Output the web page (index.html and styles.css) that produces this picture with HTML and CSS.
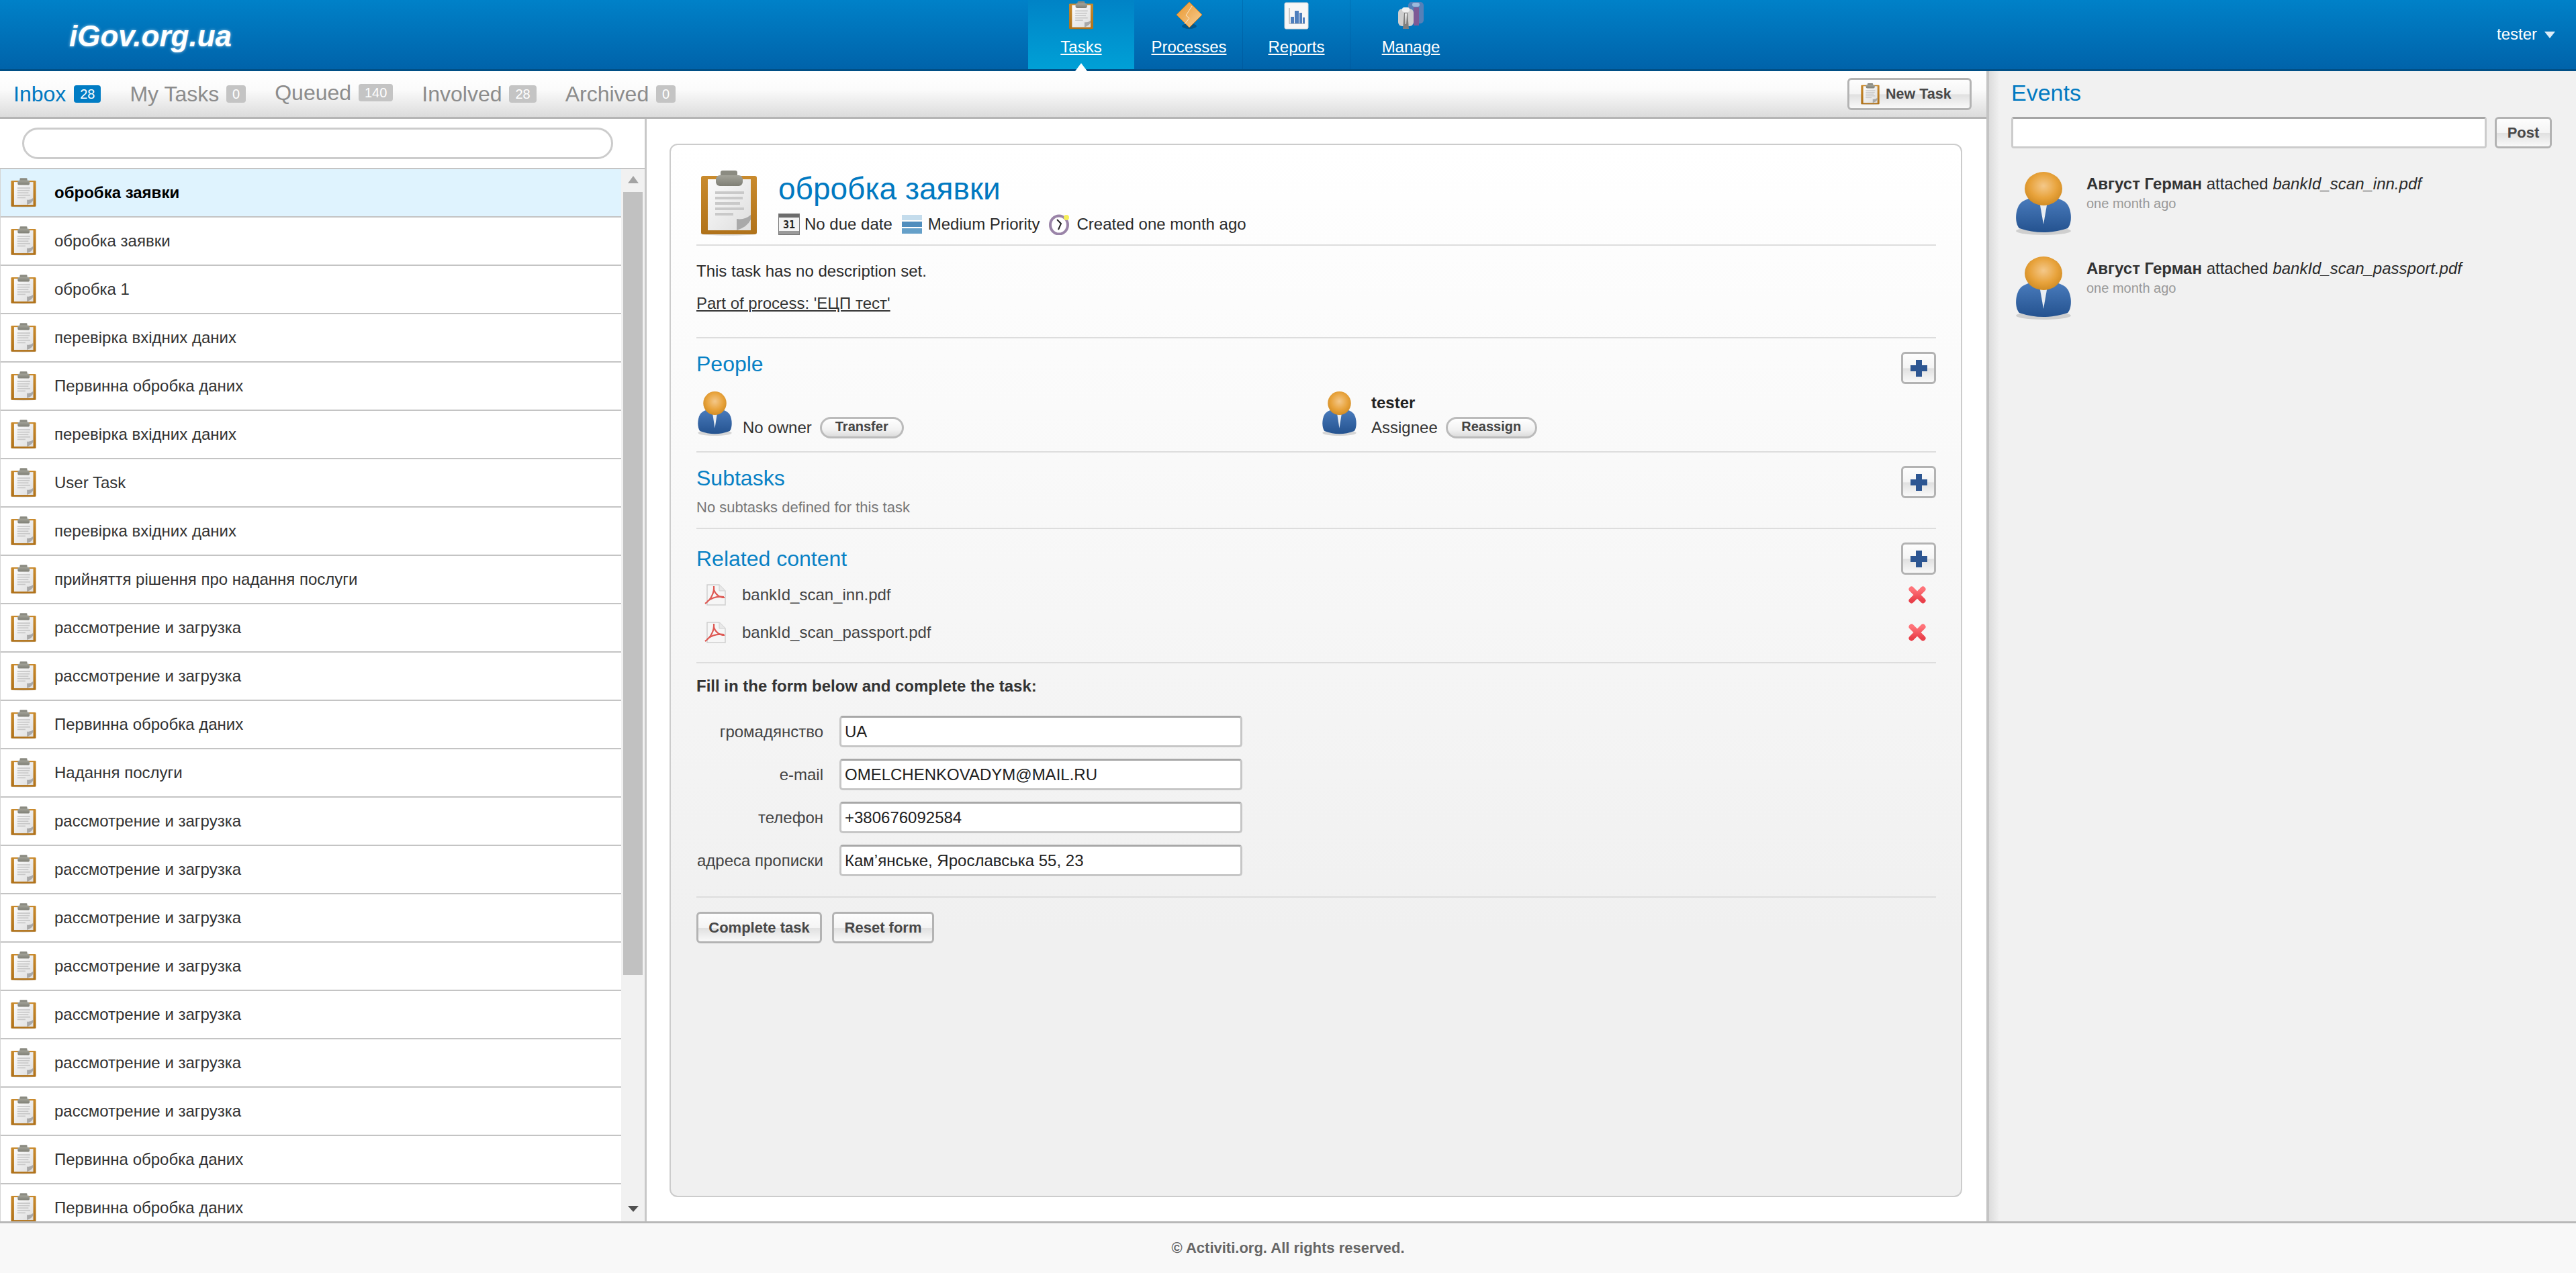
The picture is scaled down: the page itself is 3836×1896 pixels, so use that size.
FILE: index.html
```html
<!DOCTYPE html>
<html lang="en">
<head>
  <meta charset="UTF-8" />
  <title>Activiti Explorer</title>
  <link rel="stylesheet" href="styles.css">
</head>
<body>
  <svg class="icon-defs" xmlns="http://www.w3.org/2000/svg">
    <defs>
      <linearGradient id="gBrown" x1="0" y1="0" x2="0" y2="1"><stop offset="0" stop-color="#c98a2c"/><stop offset="1" stop-color="#b0721a"/></linearGradient>
      <linearGradient id="gPaper" x1="0" y1="0" x2="1" y2="1"><stop offset="0" stop-color="#fbfbfb"/><stop offset="1" stop-color="#dedede"/></linearGradient>
      <linearGradient id="gClip" x1="0" y1="0" x2="0" y2="1"><stop offset="0" stop-color="#a3a399"/><stop offset="1" stop-color="#7f7f75"/></linearGradient>
      <radialGradient id="gHead" cx="0.5" cy="0.42" r="0.6"><stop offset="0" stop-color="#f4c88a"/><stop offset="0.6" stop-color="#e8a33c"/><stop offset="1" stop-color="#cf8a22"/></radialGradient>
      <linearGradient id="gSuit" x1="0" y1="0" x2="0" y2="1"><stop offset="0" stop-color="#4a7cbd"/><stop offset="1" stop-color="#24528f"/></linearGradient>
      <linearGradient id="gDiamond" x1="0" y1="0" x2="1" y2="1"><stop offset="0" stop-color="#e8952c"/><stop offset="1" stop-color="#f8cf96"/></linearGradient>
      <linearGradient id="gRed" x1="0" y1="0" x2="0" y2="1"><stop offset="0" stop-color="#ff7379"/><stop offset="1" stop-color="#e9404a"/></linearGradient>

      <symbol id="i-clipboard" viewBox="0 0 85 97">
        <ellipse cx="42" cy="94" rx="42" ry="3" fill="#000" opacity="0.12"/>
        <rect x="1" y="8" width="83" height="87" rx="3" fill="url(#gBrown)"/>
        <rect x="11" y="13" width="64" height="76" fill="url(#gPaper)"/>
        <rect x="30" y="0" width="25" height="10" rx="3" fill="#8b8b81"/>
        <rect x="23" y="7" width="40" height="16" rx="6" fill="url(#gClip)"/>
        <g fill="#c9c9c9">
          <rect x="22" y="31" width="43" height="4"/>
          <rect x="22" y="39" width="41" height="4"/>
          <rect x="22" y="47" width="37" height="4"/>
          <rect x="22" y="55" width="43" height="4"/>
          <rect x="22" y="63" width="27" height="4"/>
        </g>
        <path d="M54 89 L54 72 Q66 74 75 66 L75 73 Q70 84 54 89Z" fill="#a9a9a9"/>
      </symbol>

      <symbol id="i-person" viewBox="0 0 86 94" preserveAspectRatio="none">
        <ellipse cx="43" cy="88" rx="41" ry="6" fill="#000" opacity="0.14"/>
        <path d="M7 84 C0 76 1 58 7 49 C12 42 20 40 28 38 L58 38 C66 40 74 42 79 49 C85 58 86 76 79 84 Q43 96 7 84Z" fill="url(#gSuit)"/>
        <path d="M37 44 L49 44 L43 78Z" fill="#e8edf3"/>
        <ellipse cx="43" cy="25" rx="28" ry="25" fill="url(#gHead)"/>
      </symbol>

      <symbol id="i-process" viewBox="0 0 42 42">
        <ellipse cx="21" cy="37" rx="11" ry="4" fill="#000" opacity="0.25"/>
        <path d="M21 1 L40 20 L21 39 L2 20Z" fill="url(#gDiamond)" stroke="#d67f1c" stroke-width="1"/>
        <path d="M25 7 L16 21 L21 25 L14 34" fill="none" stroke="#fff" stroke-width="1" opacity="0.7"/>
      </symbol>

      <symbol id="i-report" viewBox="0 0 42 42">
        <rect x="3" y="2" width="35" height="39" rx="2" fill="#f7f7f7" stroke="#d8d8d8"/>
        <path d="M10 10 L10 33 L33 33" fill="none" stroke="#999" stroke-width="1"/>
        <g fill="#4f7fbd">
          <rect x="12" y="23" width="5" height="10"/>
          <rect x="18" y="14" width="6" height="19"/>
          <rect x="25" y="17" width="4" height="16"/>
          <rect x="30" y="24" width="3" height="9"/>
        </g>
      </symbol>

      <symbol id="i-manage" viewBox="0 0 42 42">
        <rect x="17" y="1" width="23" height="32" rx="5" fill="#5580b8"/>
        <rect x="23" y="2" width="11" height="6" rx="3" fill="#9db9dc"/>
        <rect x="25" y="9" width="8" height="27" fill="#7d5a95"/>
        <rect x="2" y="11" width="23" height="26" rx="6" fill="#cfcfcf"/>
        <rect x="8" y="9" width="11" height="7" rx="3" fill="#f0f0f0"/>
        <path d="M11 17 L16 17 L18 41 L9 41Z" fill="#7f7f7f"/>
        <path d="M12 18 L15 18 L14 34 L13 34Z" fill="#eee"/>
      </symbol>

      <symbol id="i-calendar" viewBox="0 0 32 32">
        <rect x="0.5" y="0.5" width="31" height="31" fill="#f3f3f3" stroke="#777"/>
        <rect x="1" y="1" width="30" height="5" fill="#6c6c6c"/>
        <rect x="1" y="26" width="30" height="5" fill="#9a9a9a"/>
        <text x="16" y="22" text-anchor="middle" class="cal-day">31</text>
      </symbol>

      <symbol id="i-priority" viewBox="0 0 30 28">
        <rect x="0" y="0" width="30" height="8" fill="#c4dcec"/>
        <rect x="0" y="10" width="30" height="8" fill="#4f8dbd"/>
        <rect x="0" y="20" width="30" height="8" fill="#65a0c9"/>
      </symbol>

      <symbol id="i-clock" viewBox="0 0 32 32">
        <ellipse cx="15" cy="17" rx="13" ry="13.5" fill="#fff" stroke="#9a84a8" stroke-width="4"/>
        <path d="M12 9 L18 15 L14 24" fill="none" stroke="#222" stroke-width="2"/>
        <circle cx="26" cy="6" r="4" fill="#f5ee5a"/>
      </symbol>

      <symbol id="i-pdf" viewBox="0 0 32 32">
        <path d="M4 1 L22 1 L31 10 L31 31 L4 31Z" fill="#f6f6f6" stroke="#cfcfcf" stroke-width="1.5"/>
        <path d="M22 1 L22 10 L31 10" fill="#e8e8e8" stroke="#cfcfcf"/>
        <path d="M14 3 C15 12 10 23 1 29 M14 8 C16 15 22 20 30 20 M4 26 C11 20 21 18 29 19" fill="none" stroke="#de5a55" stroke-width="2.2"/>
      </symbol>

      <symbol id="i-plus" viewBox="0 0 25 25">
        <path d="M8 0 H17 V8 H25 V17 H17 V25 H8 V17 H0 V8 H8Z" fill="#2d5692"/>
      </symbol>

      <symbol id="i-remove" viewBox="0 0 26 26">
        <path d="M4.5 4.5 L21.5 21.5 M21.5 4.5 L4.5 21.5" fill="none" stroke="url(#gRed)" stroke-width="8" stroke-linecap="round"/>
      </symbol>
    </defs>
  </svg>

  <header class="topbar">
    <div class="logo">iGov.org.ua</div>
    <nav class="nav">
      <a class="nav-item active"><svg class="nav-icon"><use href="#i-clipboard"/></svg><span>Tasks</span></a>
      <a class="nav-item"><svg class="nav-icon"><use href="#i-process"/></svg><span>Processes</span></a>
      <a class="nav-item"><svg class="nav-icon"><use href="#i-report"/></svg><span>Reports</span></a>
      <a class="nav-item last"><svg class="nav-icon"><use href="#i-manage"/></svg><span>Manage</span></a>
    </nav>
    <div class="user">tester<i class="caret"></i></div>
  </header>

  <div class="main">
    <div class="content">
      <div class="tabs">
        <a class="tab active">Inbox <b class="badge">28</b></a>
        <a class="tab">My Tasks <b class="badge">0</b></a>
        <a class="tab raised">Queued <b class="badge">140</b></a>
        <a class="tab">Involved <b class="badge">28</b></a>
        <a class="tab">Archived <b class="badge">0</b></a>
        <button class="btn new-task"><svg class="new-task-icon"><use href="#i-clipboard"/></svg>New Task</button>
      </div>

      <div class="columns">
        <aside class="task-col">
          <div class="search-wrap"><input class="search" type="text" /></div>
          <div class="list-wrap">
            <ul class="task-list">
              <li class="selected"><svg class="row-icon"><use href="#i-clipboard"/></svg>обробка заявки</li>
              <li><svg class="row-icon"><use href="#i-clipboard"/></svg>обробка заявки</li>
              <li><svg class="row-icon"><use href="#i-clipboard"/></svg>обробка 1</li>
              <li><svg class="row-icon"><use href="#i-clipboard"/></svg>перевірка вхідних даних</li>
              <li><svg class="row-icon"><use href="#i-clipboard"/></svg>Первинна обробка даних</li>
              <li><svg class="row-icon"><use href="#i-clipboard"/></svg>перевірка вхідних даних</li>
              <li><svg class="row-icon"><use href="#i-clipboard"/></svg>User Task</li>
              <li><svg class="row-icon"><use href="#i-clipboard"/></svg>перевірка вхідних даних</li>
              <li><svg class="row-icon"><use href="#i-clipboard"/></svg>прийняття рішення про надання послуги</li>
              <li><svg class="row-icon"><use href="#i-clipboard"/></svg>рассмотрение и загрузка</li>
              <li><svg class="row-icon"><use href="#i-clipboard"/></svg>рассмотрение и загрузка</li>
              <li><svg class="row-icon"><use href="#i-clipboard"/></svg>Первинна обробка даних</li>
              <li><svg class="row-icon"><use href="#i-clipboard"/></svg>Надання послуги</li>
              <li><svg class="row-icon"><use href="#i-clipboard"/></svg>рассмотрение и загрузка</li>
              <li><svg class="row-icon"><use href="#i-clipboard"/></svg>рассмотрение и загрузка</li>
              <li><svg class="row-icon"><use href="#i-clipboard"/></svg>рассмотрение и загрузка</li>
              <li><svg class="row-icon"><use href="#i-clipboard"/></svg>рассмотрение и загрузка</li>
              <li><svg class="row-icon"><use href="#i-clipboard"/></svg>рассмотрение и загрузка</li>
              <li><svg class="row-icon"><use href="#i-clipboard"/></svg>рассмотрение и загрузка</li>
              <li><svg class="row-icon"><use href="#i-clipboard"/></svg>рассмотрение и загрузка</li>
              <li><svg class="row-icon"><use href="#i-clipboard"/></svg>Первинна обробка даних</li>
              <li><svg class="row-icon"><use href="#i-clipboard"/></svg>Первинна обробка даних</li>
            </ul>
            <div class="scrollbar">
              <i class="arrow-up"></i>
              <div class="thumb"></div>
              <i class="arrow-down"></i>
            </div>
          </div>
        </aside>

        <section class="detail">
          <div class="card">
            <div class="sec sec-title">
              <svg class="title-icon"><use href="#i-clipboard"/></svg>
              <div>
                <h1 class="task-title">обробка заявки</h1>
                <div class="meta">
                  <svg class="meta-icon"><use href="#i-calendar"/></svg><span>No due date</span>
                  <svg class="meta-icon priority"><use href="#i-priority"/></svg><span>Medium Priority</span>
                  <svg class="meta-icon clock"><use href="#i-clock"/></svg><span>Created one month ago</span>
                </div>
              </div>
            </div>

            <div class="sec sec-desc">
              <p>This task has no description set.</p>
              <p><a class="process-link">Part of process: 'ЕЦП тест'</a></p>
            </div>

            <div class="sec sec-people">
              <div class="sec-head"><h2>People</h2><button class="btn plus"><svg><use href="#i-plus"/></svg></button></div>
              <div class="people">
                <div class="person">
                  <svg class="person-icon"><use href="#i-person"/></svg>
                  <div class="person-info">
                    <b class="person-name"></b>
                    <div class="person-role">No owner <button class="pill transfer">Transfer</button></div>
                  </div>
                </div>
                <div class="person">
                  <svg class="person-icon"><use href="#i-person"/></svg>
                  <div class="person-info">
                    <b class="person-name">tester</b>
                    <div class="person-role">Assignee <button class="pill reassign">Reassign</button></div>
                  </div>
                </div>
              </div>
            </div>

            <div class="sec sec-subtasks">
              <div class="sec-head"><h2>Subtasks</h2><button class="btn plus"><svg><use href="#i-plus"/></svg></button></div>
              <div class="muted">No subtasks defined for this task</div>
            </div>

            <div class="sec sec-related">
              <div class="sec-head"><h2 class="low">Related content</h2><button class="btn plus"><svg><use href="#i-plus"/></svg></button></div>
              <div class="files">
                <div class="file"><svg class="pdf"><use href="#i-pdf"/></svg><span>bankId_scan_inn.pdf</span><svg class="remove"><use href="#i-remove"/></svg></div>
                <div class="file"><svg class="pdf"><use href="#i-pdf"/></svg><span>bankId_scan_passport.pdf</span><svg class="remove"><use href="#i-remove"/></svg></div>
              </div>
            </div>

            <div class="sec sec-form">
              <div class="form-title">Fill in the form below and complete the task:</div>
              <div class="form-grid">
                <label>громадянство</label><input class="field" type="text" value="UA" />
                <label>e-mail</label><input class="field" type="text" value="OMELCHENKOVADYM@MAIL.RU" />
                <label>телефон</label><input class="field" type="text" value="+380676092584" />
                <label>адреса прописки</label><input class="field" type="text" value="Кам’янське, Ярославська 55, 23" />
              </div>
            </div>

            <div class="actions">
              <button class="btn action complete">Complete task</button>
              <button class="btn action reset">Reset form</button>
            </div>
          </div>
        </section>
      </div>
    </div>

    <aside class="events">
      <h2 class="events-title">Events</h2>
      <div class="post-row"><input class="post-input" type="text" /><button class="btn post">Post</button></div>
      <div class="event">
        <svg class="event-icon"><use href="#i-person"/></svg>
        <div>
          <div class="event-text"><b>Август Герман</b> attached <em>bankId_scan_inn.pdf</em></div>
          <div class="event-time">one month ago</div>
        </div>
      </div>
      <div class="event">
        <svg class="event-icon"><use href="#i-person"/></svg>
        <div>
          <div class="event-text"><b>Август Герман</b> attached <em>bankId_scan_passport.pdf</em></div>
          <div class="event-time">one month ago</div>
        </div>
      </div>
    </aside>
  </div>

  <footer class="footer">© Activiti.org. All rights reserved.</footer>
</body>
</html>
```
FILE: styles.css
```css
* { box-sizing: border-box; }
body {
  margin: 0;
  height: 100vh;
  display: flex;
  flex-direction: column;
  overflow: hidden;
  background: #fff;
  color: #2a2a2a;
  font-family: "Liberation Sans", Arial, sans-serif;
  font-size: 24px;
}
h1, h2, p, ul { margin: 0; padding: 0; }
.icon-defs { position: absolute; width: 0; height: 0; }
.cal-day { font: bold 15px "DejaVu Sans Mono", monospace; fill: #222; }

/* top bar */
.topbar {
  height: 106px;
  flex: none;
  display: flex;
  background: linear-gradient(#0081c8, #0063aa);
  border-bottom: 3px solid #004f86;
  color: #fff;
}
.logo {
  width: 1531px;
  padding: 28px 0 0 103px;
  font-size: 44px;
  line-height: 52px;
  font-weight: bold;
  font-style: italic;
  text-shadow: 0 0 4px rgba(255, 255, 255, 0.6);
}
.nav { display: flex; }
.nav-item {
  position: relative;
  width: 160px;
  display: flex;
  flex-direction: column;
  align-items: center;
  padding-top: 2px;
  text-decoration: underline;
  border-right: 1px solid rgba(0, 60, 120, 0.25);
}
.nav-item.active { background: linear-gradient(#0083c6, #00a0d6); border-right: 0; width: 158px; margin-right: 2px; }
.nav-item.active::after {
  content: "";
  position: absolute;
  left: 70px;
  bottom: -3px;
  border: 9px solid transparent;
  border-top: 0;
  border-bottom: 12px solid #fff;
}
.nav-item.last { width: 180px; border-right: 0; }
.nav-icon { width: 42px; height: 42px; flex: none; }
.nav-item span { margin-top: 11px; line-height: 30px; }
.user { margin-left: auto; padding: 36px 31px 0 0; line-height: 30px; display: flex; }
.caret {
  margin: 11px 0 0 11px;
  border: 8px solid transparent;
  border-top: 10px solid #dcecf7;
  border-bottom: 0;
  height: 0;
}

.main { flex: 1; display: flex; min-height: 0; border-bottom: 3px solid #b8b8b8; }
.content { width: 2958px; display: flex; flex-direction: column; flex: none; }

/* tabs */
.tabs {
  height: 71px;
  flex: none;
  display: flex;
  align-items: center;
  gap: 43px;
  padding: 0 22px 0 20px;
  background: linear-gradient(#fff, #fbfbfb 40%, #dcdcdc);
  border-bottom: 3px solid #b5b5b5;
}
.tab { font-size: 32px; color: #8c8c8c; display: flex; align-items: center; white-space: pre; }
.tab.active { color: #0079c1; }
.tab.raised { margin-top: -4px; }
.badge {
  margin-left: 2px;
  padding: 0 9px;
  height: 26px;
  line-height: 26px;
  border-radius: 4px;
  background: #c4c4c4;
  color: #fff;
  font-size: 20px;
  font-weight: normal;
}
.tab.active .badge { background: #007cc4; margin-left: 3px; }

.btn {
  font-family: inherit;
  font-weight: bold;
  font-size: 22px;
  color: #484848;
  padding: 0;
  border: 3px solid #b3b3b3;
  border-radius: 6px;
  background: linear-gradient(#fdfdfd, #f4f4f4 50%, #e0e0e0 52%, #f9f9f9);
}
.new-task {
  margin-left: auto;
  width: 185px;
  height: 48px;
  padding-left: 17px;
  display: flex;
  align-items: center;
  gap: 9px;
  font-size: 21.5px;
}
.new-task-icon { width: 28px; height: 32px; }

.columns { flex: 1; display: flex; min-height: 0; }

/* task list */
.task-col {
  width: 963px;
  flex: none;
  display: flex;
  flex-direction: column;
  border-right: 3px solid #c8c8c8;
  min-height: 0;
}
.search-wrap { height: 73px; flex: none; padding: 13px 47px 0 33px; }
.search {
  display: block;
  width: 100%;
  height: 47px;
  border: 3px solid #ccc;
  border-radius: 24px;
  background: #fff;
}
.list-wrap {
  flex: 1;
  min-height: 0;
  display: flex;
  border-top: 2px solid #c4c4c4;
}
.task-list { flex: 1; list-style: none; overflow: hidden; border-left: 1px solid #d4d4d4; }
.task-list li {
  height: 72px;
  display: flex;
  align-items: center;
  gap: 27px;
  padding: 0 0 0 15px;
  border-bottom: 2px solid #c4c4c4;
  white-space: nowrap;
  color: #333;
}
.task-list li.selected { background: #dff3fe; font-weight: bold; color: #000; }
.row-icon { width: 38px; height: 44px; flex: none; }
.scrollbar {
  width: 35px;
  flex: none;
  background: #f1f1f1;
  display: flex;
  flex-direction: column;
  align-items: center;
}
.arrow-up, .arrow-down { border: 8px solid transparent; height: 0; margin: 10px 0 13px; }
.arrow-up { border-top: 0; border-bottom: 11px solid #a3a3a3; }
.arrow-down { border-bottom: 0; border-top: 9px solid #505050; margin: 10px 0 14px; margin-top: auto; }
.thumb { width: 29px; height: 1166px; background: #c1c1c1; }

/* task detail */
.detail { flex: 1; padding: 37px 36px 36px 34px; min-width: 0; }
.card {
  height: 100%;
  padding: 0 37px 0 38px;
  border: 2px solid #ccc;
  border-radius: 12px;
  background: linear-gradient(#fff, #f0f0f0 75%);
}
.sec { border-bottom: 2px solid #ddd; }
.sec-title { height: 150px; padding: 38px 0 0 6px; display: flex; gap: 31px; }
.title-icon { width: 85px; height: 97px; flex: none; }
.task-title { font-size: 46px; line-height: 54px; font-weight: normal; color: #0079c1; }
.meta { display: flex; align-items: center; height: 32px; margin-top: 10px; white-space: nowrap; }
.meta-icon { width: 32px; height: 32px; margin-right: 7px; flex: none; }
.meta span { margin-right: 14px; }
.meta-icon.priority { width: 30px; height: 28px; margin-right: 9px; }
.meta-icon.clock { margin-right: 9px; }

.sec-desc { height: 138px; padding-top: 23px; }
.sec-desc p { line-height: 30px; margin-bottom: 18px; }
.process-link { color: #333; text-decoration: underline; }

.sec-head { display: flex; justify-content: space-between; align-items: flex-start; height: 48px; }
.sec-head h2 { font-size: 32px; line-height: 36px; font-weight: normal; color: #0881c5; }
.sec-head h2.low { padding-top: 6px; }
.plus { width: 52px; height: 48px; display: flex; align-items: center; justify-content: center; }
.plus svg { width: 25px; height: 25px; }

.sec-people { height: 170px; padding-top: 20px; }
.people { display: grid; grid-template-columns: 930px 1fr; margin-top: 11px; }
.person { display: flex; }
.person-icon { width: 53px; height: 66px; margin-left: 1px; flex: none; }
.person-info {
  margin-left: 15px;
  height: 70px;
  padding-top: 2px;
  display: flex;
  flex-direction: column;
  justify-content: space-between;
}
.person + .person .person-info { margin-left: 21px; }
.person-name { line-height: 30px; color: #222; }
.person-role { display: flex; align-items: center; gap: 12px; height: 33px; color: #333; }
.pill {
  height: 32px;
  padding: 0 0 3px;
  font: bold 20px "Liberation Sans", Arial, sans-serif;
  color: #444;
  border: 3px solid #bbb;
  border-radius: 16px;
  background: linear-gradient(#fff, #f2f2f2 60%, #dcdcdc);
}
.transfer { width: 125px; }
.reassign { width: 136px; }

.sec-subtasks { height: 114px; padding-top: 20px; }
.muted { font-size: 22px; line-height: 28px; color: #777; }

.sec-related { height: 200px; padding-top: 20px; }
.files { margin-top: 14px; display: flex; flex-direction: column; gap: 24px; }
.file { height: 32px; display: flex; align-items: center; color: #444; padding-left: 12px; }
.pdf { width: 32px; height: 32px; margin-right: 24px; }
.remove { width: 26px; height: 26px; margin: 0 15px 0 auto; }

.sec-form { height: 349px; padding-top: 19px; }
.form-title { font-weight: bold; line-height: 30px; color: #333; }
.form-grid {
  margin-top: 29px;
  display: grid;
  grid-template-columns: 189px 600px;
  column-gap: 24px;
  row-gap: 17px;
  align-items: center;
}
.form-grid label { text-align: right; color: #444; white-space: nowrap; }
.field {
  height: 47px;
  padding: 0 0 0 5px;
  font: 24px "Liberation Sans", Arial, sans-serif;
  color: #222;
  background: #fff;
  border: 3px solid #c6c6c6;
  border-top-color: #a8a8a8;
  border-radius: 5px;
}

.actions { display: flex; gap: 15px; margin-top: 21px; }
.action { height: 47px; }
.complete { width: 187px; }
.reset { width: 152px; }

/* events */
.events {
  flex: 1;
  min-width: 0;
  padding: 0 36px 0 33px;
  background: linear-gradient(90deg, #dcdcdc, #f1f1f1 16px);
  border-left: 4px solid #c4c4c4;
}
.events-title { font-size: 34px; line-height: 40px; font-weight: normal; color: #0079c1; margin-top: 12px; }
.post-row { display: flex; gap: 12px; margin-top: 16px; }
.post-input {
  width: 708px;
  height: 47px;
  background: #fff;
  border: 3px solid #ccc;
  border-top-color: #a5a5a5;
  border-radius: 4px;
}
.post { width: 85px; height: 47px; }
.event { display: flex; height: 126px; gap: 21px; margin-left: 5px; }
.post-row + .event { margin-top: 35px; }
.event-icon { width: 86px; height: 94px; flex: none; }
.event-text { margin-top: 3px; line-height: 30px; white-space: nowrap; }
.event-text b { color: #333; }
.event-time { font-size: 20px; line-height: 28px; color: #999; }

.footer {
  height: 74px;
  flex: none;
  background: #f8f8f8;
  text-align: center;
  font-size: 22px;
  line-height: 74px;
  font-weight: bold;
  color: #666;
}
```
